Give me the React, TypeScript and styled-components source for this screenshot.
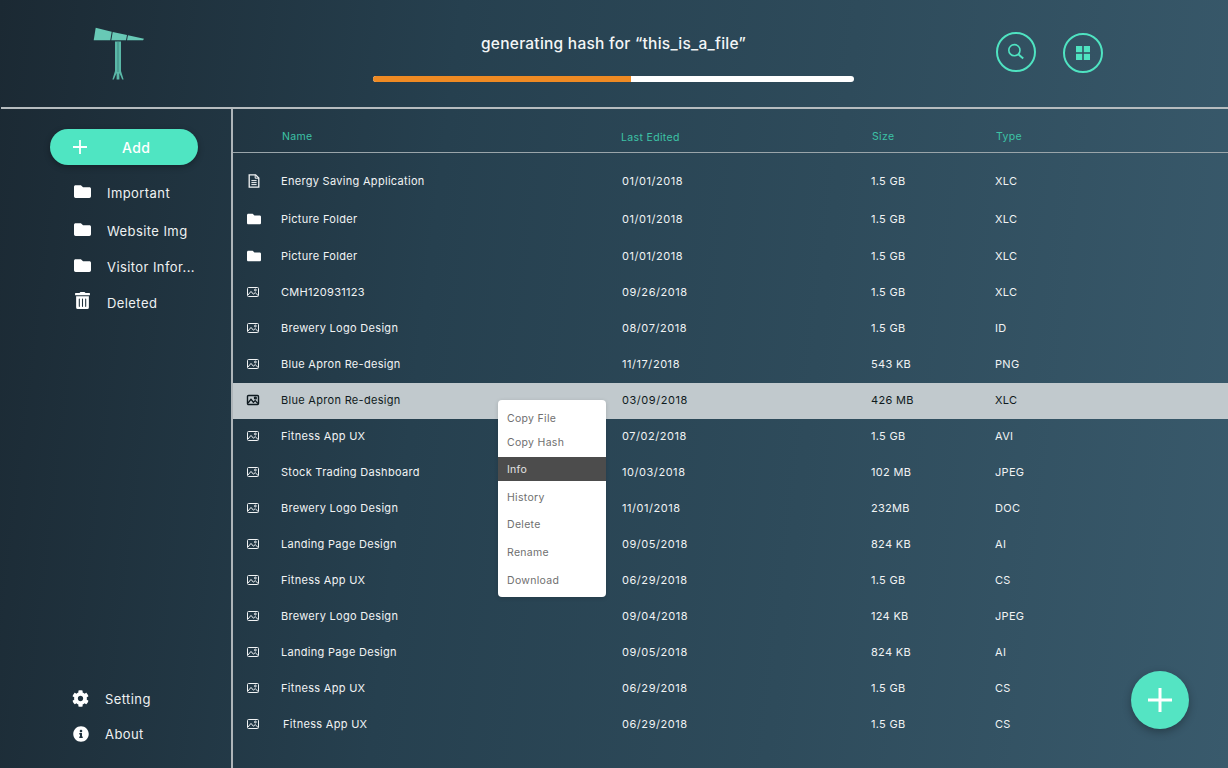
import React from "react";
import styled, { createGlobalStyle } from "styled-components";
import { FaFolder, FaCog, FaInfoCircle, FaTrashAlt } from "react-icons/fa";

const Global = createGlobalStyle`
  html, body { margin: 0; padding: 0; height: 100%; }
  body { font-family: Inter, Roboto, "Liberation Sans", sans-serif; }
  * { box-sizing: border-box; }
`;

const Page = styled.div`
  position: relative;
  width: 1228px;
  height: 768px;
  overflow: hidden;
  display: flex;
  flex-direction: column;
  color: #fff;
  background: linear-gradient(97deg, #1b2933 0%, #26404f 35%, #2e4b5b 65%, #395a6c 100%);
`;

const Header = styled.header`
  height: 109px;
  flex: none;
  margin-left: 1px;
  border-bottom: 2px solid #b6bcbf;
  display: flex;
  align-items: flex-start;
  padding-left: 92px;
`;

const Logo = styled.svg`
  width: 52px;
  height: 54px;
  margin-top: 27px;
  flex: none;
`;

const Progress = styled.div`
  width: 481px;
  margin-left: 228px;
  flex: none;
  display: flex;
  flex-direction: column;
  align-items: center;
  padding-top: 34px;
`;

const Title = styled.div`
  font-size: 15.5px;
  font-weight: 500;
  line-height: 20px;
  letter-spacing: 0.25px;
  color: #f4f6f6;
`;

const Track = styled.div`
  width: 100%;
  height: 6px;
  margin-top: 22px;
  border-radius: 3px;
  background: #fff;
  overflow: hidden;
`;

const Fill = styled.div`
  height: 100%;
  background: #ef8a23;
`;

const RoundButton = styled.button<{ $top: number; $left: number }>`
  width: 40px;
  height: 40px;
  flex: none;
  padding: 0;
  margin-top: ${(p) => p.$top}px;
  margin-left: ${(p) => p.$left}px;
  border: 2px solid #4fe3c1;
  border-radius: 50%;
  background: transparent;
  display: flex;
  align-items: center;
  justify-content: center;
`;

const Body = styled.div`
  flex: 1;
  display: flex;
  min-height: 0;
`;

const Sidebar = styled.aside`
  width: 233px;
  flex: none;
  border-right: 2px solid #aeb5b9;
  display: flex;
  flex-direction: column;
  justify-content: space-between;
  padding: 20px 0 17px;
`;

const AddButton = styled.button`
  width: 148px;
  height: 36px;
  margin-left: 50px;
  border: 0;
  padding: 0 0 0 23px;
  border-radius: 18px;
  background: #4fe5c2;
  box-shadow: 0 2px 6px rgba(0, 0, 0, 0.3);
  color: #fff;
  display: flex;
  align-items: center;
  font-family: inherit;
  font-size: 14px;
  font-weight: 500;
  letter-spacing: 0.4px;
`;

const AddLabel = styled.span`
  margin-left: 35px;
`;

const NavList = styled.nav<{ $top?: number }>`
  display: flex;
  flex-direction: column;
  margin-top: ${(p) => p.$top ?? 0}px;
`;

const NavItem = styled.div<{ $h: number; $left: number; $gap: number }>`
  height: ${(p) => p.$h}px;
  padding-left: ${(p) => p.$left}px;
  display: flex;
  align-items: center;
  gap: ${(p) => p.$gap}px;
  font-size: 13px;
  letter-spacing: 0.42px;
  color: #eef1f2;
`;

const NavIcon = styled.span<{ $up?: number }>`
  width: 17px;
  flex: none;
  display: flex;
  justify-content: center;
  color: #fff;
  margin-bottom: ${(p) => p.$up ?? 0}px;
`;

const Main = styled.main`
  flex: 1;
  min-width: 0;
  display: flex;
  flex-direction: column;
`;

const columns = "48px 341px 249px 124px 1fr";

const HeadRow = styled.div`
  height: 44px;
  flex: none;
  display: grid;
  grid-template-columns: ${columns};
  align-items: center;
  border-bottom: 1px solid #9aa5aa;
  padding-top: 11px;
  font-size: 10.5px;
  letter-spacing: 0.35px;
  color: #3dc3a6;
`;

const HeadCell = styled.div<{ $shift?: number; $down?: number }>`
  margin-left: ${(p) => p.$shift ?? 0}px;
  margin-top: ${(p) => p.$down ?? 0}px;
`;

const Rows = styled.div`
  padding-top: 10px;
  display: flex;
  flex-direction: column;
`;

const Row = styled.div<{ $h: number; $active?: boolean }>`
  height: ${(p) => p.$h}px;
  flex: none;
  display: grid;
  grid-template-columns: ${columns};
  align-items: center;
  padding-bottom: 2px;
  font-size: 11px;
  letter-spacing: 0.3px;
  color: ${(p) => (p.$active ? "#0f1a20" : "#f1f3f4")};
  background: ${(p) => (p.$active ? "#c1c9cd" : "transparent")};
`;

const IconCell = styled.div`
  padding-left: 14px;
  display: flex;
  align-items: center;
  height: 100%;
`;

const NameCell = styled.div<{ $shift?: boolean }>`
  padding-left: ${(p) => (p.$shift ? 2 : 0)}px;
`;

const DateCell = styled.div`
  letter-spacing: 0.55px;
`;

const Cell = styled.div``;

const Menu = styled.div`
  position: absolute;
  left: 498px;
  top: 400px;
  width: 108px;
  height: 197px;
  background: #fff;
  border-radius: 4px;
  padding-top: 6px;
  box-shadow: 0 1px 4px rgba(0, 0, 0, 0.15);
  display: flex;
  flex-direction: column;
`;

const MenuItem = styled.div<{ $h: number; $active?: boolean; $after?: number }>`
  height: ${(p) => p.$h}px;
  margin-bottom: ${(p) => p.$after ?? 0}px;
  padding-left: 9px;
  display: flex;
  align-items: center;
  font-size: 10.5px;
  letter-spacing: 0.3px;
  color: ${(p) => (p.$active ? "#e4e4e4" : "#6f6f6f")};
  background: ${(p) => (p.$active ? "#4c4c4c" : "transparent")};
`;

const Fab = styled.button`
  position: absolute;
  left: 1131px;
  top: 671px;
  width: 58px;
  height: 58px;
  padding: 0;
  border: 0;
  border-radius: 50%;
  background: #54e4c3;
  box-shadow: 0 3px 8px rgba(0, 0, 0, 0.3);
  display: flex;
  align-items: center;
  justify-content: center;
`;

const Plus = ({ size, w }: { size: number; w: number }) => (
  <svg width={size} height={size} viewBox={`0 0 ${size} ${size}`}>
    <path d={`M${size / 2} 0V${size}M0 ${size / 2}H${size}`} stroke="#fff" strokeWidth={w} fill="none" />
  </svg>
);

const DocIcon = ({ c }: { c: string }) => (
  <svg width="14" height="14" viewBox="0 0 14 14" fill="none" stroke={c} strokeWidth="1.3">
    <path d="M2.2 0.8H8.6L11.8 4V13.2H2.2Z" />
    <path d="M8.2 1V4.2H11.6M4.4 6.6H9.6M4.4 8.6H9.6M4.4 10.6H9.6" strokeWidth="1" />
  </svg>
);

const ImageIcon = ({ c, heavy }: { c: string; heavy?: boolean }) => (
  <svg width="12" height="10" viewBox="0 0 12 10" fill="none" stroke={c} strokeWidth={heavy ? 1.4 : 1} style={{ overflow: "visible" }}>
    <rect x="0.5" y="0.5" width="11" height="9" rx="1" />
    <path d="M1 8L4 4.4L6.4 7.2L8.2 5.6L11 8.4" />
    <circle cx="8.4" cy="3" r="0.9" />
  </svg>
);

type Kind = "doc" | "folder" | "image";
type R = { k: Kind; n: string; d: string; s: string; t: string; h: number; active?: boolean; shift?: boolean };

const rows: R[] = [
  { k: "doc", n: "Energy Saving Application", d: "01/01/2018", s: "1.5 GB", t: "XLC", h: 38 },
  { k: "folder", n: "Picture Folder", d: "01/01/2018", s: "1.5 GB", t: "XLC", h: 38 },
  { k: "folder", n: "Picture Folder", d: "01/01/2018", s: "1.5 GB", t: "XLC", h: 36 },
  { k: "image", n: "CMH120931123", d: "09/26/2018", s: "1.5 GB", t: "XLC", h: 36 },
  { k: "image", n: "Brewery Logo Design", d: "08/07/2018", s: "1.5 GB", t: "ID", h: 36 },
  { k: "image", n: "Blue Apron Re-design", d: "11/17/2018", s: "543 KB", t: "PNG", h: 36 },
  { k: "image", n: "Blue Apron Re-design", d: "03/09/2018", s: "426 MB", t: "XLC", h: 36, active: true },
  { k: "image", n: "Fitness App UX", d: "07/02/2018", s: "1.5 GB", t: "AVI", h: 36 },
  { k: "image", n: "Stock Trading Dashboard", d: "10/03/2018", s: "102 MB", t: "JPEG", h: 36 },
  { k: "image", n: "Brewery Logo Design", d: "11/01/2018", s: "232MB", t: "DOC", h: 36 },
  { k: "image", n: "Landing Page Design", d: "09/05/2018", s: "824 KB", t: "AI", h: 36 },
  { k: "image", n: "Fitness App UX", d: "06/29/2018", s: "1.5 GB", t: "CS", h: 36 },
  { k: "image", n: "Brewery Logo Design", d: "09/04/2018", s: "124 KB", t: "JPEG", h: 36 },
  { k: "image", n: "Landing Page Design", d: "09/05/2018", s: "824 KB", t: "AI", h: 36 },
  { k: "image", n: "Fitness App UX", d: "06/29/2018", s: "1.5 GB", t: "CS", h: 36 },
  { k: "image", n: "Fitness App UX", d: "06/29/2018", s: "1.5 GB", t: "CS", h: 36, shift: true },
];

const RowIcon = ({ k, active }: { k: Kind; active?: boolean }) => {
  const c = active ? "#0f1a20" : "#f1f3f4";
  if (k === "doc") return <DocIcon c={c} />;
  if (k === "folder") return <FaFolder size={14} color="#fff" />;
  return <ImageIcon c={c} heavy={active} />;
};

const nav = [
  { label: "Important", h: 38 },
  { label: "Website Img", h: 38 },
  { label: "Visitor Infor...", h: 34 },
  { label: "Deleted", h: 38, trash: true },
];

export default function App() {
  return (
    <Page>
      <Global />
      <Header>
        <Logo viewBox="93 27 52 54">
          <g fill="#68c9b6">
            <path d="M95.7 27.7L111.7 31.7L110.3 40.3H93.7Z" />
            <path d="M112.7 31.9L127 35L126 40.3H111.3Z" />
            <path d="M128 35.3L144 38.7L143 40.3H127Z" />
          </g>
          <path d="M115 41.6H121V71L123.6 79.4H122.2L119.4 73V79.4H116.6V73L113.8 79.4H112.4L115 71Z" fill="#5ab8a7" />
          <path d="M118 41.6V72" stroke="#3d8580" strokeWidth="1" />
        </Logo>
        <Progress>
          <Title>generating hash for “this_is_a_file”</Title>
          <Track>
            <Fill style={{ width: `${(258 / 481) * 100}%` }} />
          </Track>
        </Progress>
        <RoundButton $top={32} $left={142} aria-label="Search">
          <svg width="20" height="20" viewBox="0 0 20 20" fill="none" stroke="#4fe3c1" strokeWidth="1.6">
            <circle cx="8.4" cy="8.2" r="5.6" />
            <path d="M12.6 12.4L17.2 16.4" strokeWidth="2" />
          </svg>
        </RoundButton>
        <RoundButton $top={33} $left={27} aria-label="Grid">
          <svg width="14" height="14" viewBox="0 0 14 14" fill="#4fe3c1">
            <rect width="6.2" height="6.2" />
            <rect x="7.8" width="6.2" height="6.2" />
            <rect y="7.8" width="6.2" height="6.2" />
            <rect x="7.8" y="7.8" width="6.2" height="6.2" />
          </svg>
        </RoundButton>
      </Header>
      <Body>
        <Sidebar>
          <div>
            <AddButton>
              <Plus size={14} w={1.8} />
              <AddLabel>Add</AddLabel>
            </AddButton>
            <NavList $top={9}>
              {nav.map((n) => (
                <NavItem key={n.label} $h={n.h} $left={74} $gap={16}>
                  <NavIcon $up={n.trash ? 6 : 3}>{n.trash ? <FaTrashAlt size={17} /> : <FaFolder size={17} />}</NavIcon>
                  {n.label}
                </NavItem>
              ))}
            </NavList>
          </div>
          <NavList>
            <NavItem $h={35} $left={72} $gap={16}>
              <NavIcon><FaCog size={17} /></NavIcon>
              Setting
            </NavItem>
            <NavItem $h={35} $left={72} $gap={16}>
              <NavIcon><FaInfoCircle size={16} /></NavIcon>
              About
            </NavItem>
          </NavList>
        </Sidebar>
        <Main>
          <HeadRow>
            <div />
            <HeadCell $shift={1}>Name</HeadCell>
            <HeadCell $shift={-1} $down={2}>Last Edited</HeadCell>
            <HeadCell $shift={1}>Size</HeadCell>
            <HeadCell $shift={1}>Type</HeadCell>
          </HeadRow>
          <Rows>
            {rows.map((r, i) => (
              <Row key={i} $h={r.h} $active={r.active}>
                <IconCell><RowIcon k={r.k} active={r.active} /></IconCell>
                <NameCell $shift={r.shift}>{r.n}</NameCell>
                <DateCell>{r.d}</DateCell>
                <Cell>{r.s}</Cell>
                <Cell>{r.t}</Cell>
              </Row>
            ))}
          </Rows>
        </Main>
      </Body>
      <Menu>
        <MenuItem $h={24}>Copy File</MenuItem>
        <MenuItem $h={24} $after={3}>Copy Hash</MenuItem>
        <MenuItem $h={24} $active $after={2}>Info</MenuItem>
        <MenuItem $h={28}>History</MenuItem>
        <MenuItem $h={27}>Delete</MenuItem>
        <MenuItem $h={28}>Rename</MenuItem>
        <MenuItem $h={28}>Download</MenuItem>
      </Menu>
      <Fab aria-label="Add file">
        <Plus size={24} w={3} />
      </Fab>
    </Page>
  );
}
